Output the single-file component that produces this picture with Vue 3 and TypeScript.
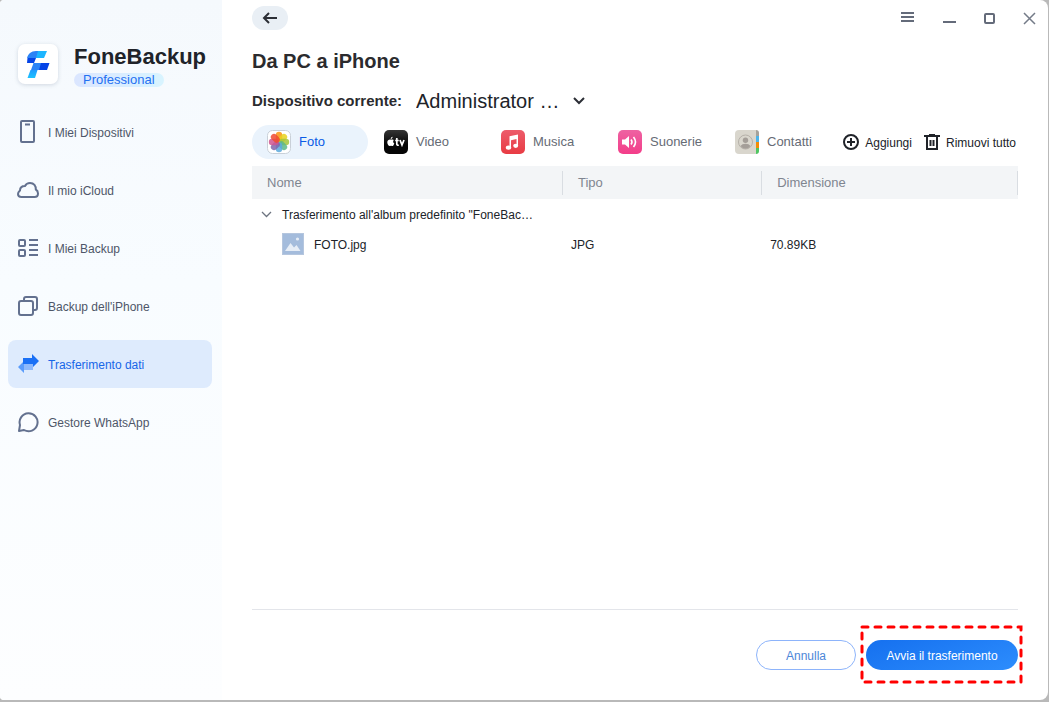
<script setup lang="ts">
import { ref } from 'vue'

interface Item {
  id: string
  label: string
}

const navItems: Item[] = [
  { id: 'devices', label: 'I Miei Dispositivi' },
  { id: 'icloud', label: 'Il mio iCloud' },
  { id: 'backups', label: 'I Miei Backup' },
  { id: 'iphone', label: "Backup dell'iPhone" },
  { id: 'transfer', label: 'Trasferimento dati' },
  { id: 'whatsapp', label: 'Gestore WhatsApp' },
]
const tabs: Item[] = [
  { id: 'photo', label: 'Foto' },
  { id: 'video', label: 'Video' },
  { id: 'music', label: 'Musica' },
  { id: 'ringtone', label: 'Suonerie' },
  { id: 'contacts', label: 'Contatti' },
]
const petals = [
  { angle: 0, color: '#f9930f' },
  { angle: 45, color: '#e8d21d' },
  { angle: 90, color: '#a4c63a' },
  { angle: 135, color: '#5cb88a' },
  { angle: 180, color: '#5aa9dc' },
  { angle: 225, color: '#8066ac' },
  { angle: 270, color: '#cf5590' },
  { angle: 315, color: '#f04a30' },
]

const activeNav = ref('transfer')
const activeTab = ref('photo')
const expanded = ref(true)
const device = ref('admin')
</script>

<template>
  <div class="window">
    <aside class="sidebar">
      <div class="brand">
        <div class="logo">
          <svg width="40" height="40" viewBox="0 0 40 40" aria-hidden="true">
            <defs>
              <linearGradient id="stem" x1="0" y1="0" x2="0" y2="1">
                <stop offset="0" stop-color="#1e9bff" />
                <stop offset="1" stop-color="#1cc3ff" />
              </linearGradient>
            </defs>
            <path d="M9 14c1-4 4-7 9-7h5l-4 7z" fill="#2b83f6" />
            <path d="M20 7h9l-3 7h-8z" fill="#1cb5ff" />
            <path d="M9.500 14H18l-2 5H9z" fill="#0544e6" />
            <path d="M15.500 19H24l-2 7h-9z" fill="#2b83f6" />
            <path d="M23 19h8.500l-2.500 7h-8z" fill="#0544e6" />
            <path d="M12.500 26h7l-2.500 8H9.500z" fill="url(#stem)" />
          </svg>
        </div>
        <div class="brand-text">
          <span class="brand-name">FoneBackup</span>
          <span class="edition">Professional</span>
        </div>
      </div>

      <nav class="nav">
        <a
          v-for="item in navItems"
          :key="item.id"
          href="#"
          class="nav-item"
          :class="{ active: item.id === activeNav }"
          @click.prevent="activeNav = item.id"
        >
          <svg class="nav-icon" width="22" height="24" viewBox="0 0 22 24" fill="none" stroke="#63718f" stroke-width="2" stroke-linejoin="round" aria-hidden="true">
            <template v-if="item.id === 'devices'">
              <rect x="4" y="1" width="13" height="21" rx="1" />
              <path d="M8 4.500h5" />
            </template>
            <path v-else-if="item.id === 'icloud'" d="M4.500 19C2 19 1 17.500 1 16c0-2 1.500-3 2-3.500 0-3 2-4.500 5-4.500 1-2 2.800-3 5-3 4 0 6 3 5.800 6.500 1.500.8 2.200 2.500 2.200 4 0 2-1.200 3.500-3.500 3.500z" />
            <template v-else-if="item.id === 'backups'">
              <rect x="2" y="4" width="6" height="6" rx="1" />
              <rect x="2" y="14" width="6" height="6" rx="1" />
              <path d="M12 4h9M12 9h9M12 14h9M12 19h9" />
            </template>
            <template v-else-if="item.id === 'iphone'">
              <rect x="2" y="7" width="14" height="14" rx="2" />
              <path d="M7 7V5q0-2 2-2h9q2 0 2 2v9q0 2-2 2h-2" />
            </template>
            <g v-else-if="item.id === 'transfer'" stroke="none">
              <path d="M1 15l6-6v3h9v6H7v3z" fill="#5a9cfb" />
              <path d="M6 6h9V2l7 7-7 7v-4H6z" fill="#1a70f5" />
              <path d="M7 12h9v6H7z" fill="#8db9fc" />
            </g>
            <path v-else d="M2 21l1-6A9 9 0 1 1 7 20z" />
          </svg>
          <span>{{ item.label }}</span>
        </a>
      </nav>
    </aside>

    <main class="main">
      <header class="topbar">
        <button type="button" class="back" aria-label="Indietro">
          <svg width="16" height="12" viewBox="0 0 16 12" fill="none" stroke="#2c2f36" stroke-width="2" aria-hidden="true">
            <path d="M15 6H2M7 1L2 6l5 5" />
          </svg>
        </button>
        <div class="controls">
          <button type="button" aria-label="Menu">
            <svg width="20" height="14" viewBox="0 0 20 14" fill="none" stroke="#646b7a" stroke-width="2" aria-hidden="true"><path d="M4 2h13M4 6h13M4 10h13" /></svg>
          </button>
          <button type="button" aria-label="Riduci a icona">
            <svg width="14" height="14" viewBox="0 0 14 14" fill="none" stroke="#646b7a" stroke-width="2" aria-hidden="true"><path d="M0 11h13" /></svg>
          </button>
          <button type="button" aria-label="Ingrandisci">
            <svg width="14" height="14" viewBox="0 0 14 14" fill="none" stroke="#646b7a" stroke-width="2" aria-hidden="true"><rect x="2" y="3" width="9" height="9" rx="1" /></svg>
          </button>
          <button type="button" aria-label="Chiudi">
            <svg width="14" height="14" viewBox="0 0 14 14" fill="none" stroke="#747b88" stroke-width="1.500" aria-hidden="true"><path d="M1 2l11 11M12 2L1 13" /></svg>
          </button>
        </div>
      </header>

      <div class="content">
        <h1>Da PC a iPhone</h1>

        <div class="device">
          <label for="device">Dispositivo corrente:</label>
          <div class="select-wrap">
            <select id="device" v-model="device">
              <option value="admin">Administrator …</option>
            </select>
            <svg width="14" height="8" viewBox="0 0 14 8" fill="none" stroke="#2c2f36" stroke-width="2" aria-hidden="true"><path d="M2 1l5 5 5-5" /></svg>
          </div>
        </div>

        <div class="toolbar">
          <div class="tabs">
            <button
              v-for="tab in tabs"
              :key="tab.id"
              type="button"
              class="tab"
              :class="{ active: tab.id === activeTab }"
              @click="activeTab = tab.id"
            >
              <svg width="24" height="24" viewBox="0 0 24 24" aria-hidden="true">
                <template v-if="tab.id === 'photo'">
                  <rect x=".5" y=".5" width="23" height="23" rx="5" fill="#fff" stroke="#c9d0d8" />
                  <rect
                    v-for="p in petals"
                    :key="p.angle"
                    x="8.800"
                    y="1.800"
                    width="6.400"
                    height="10"
                    rx="3.200"
                    :fill="p.color"
                    fill-opacity=".85"
                    :transform="`rotate(${p.angle} 12 12)`"
                  />
                </template>
                <template v-else-if="tab.id === 'video'">
                  <defs>
                    <linearGradient id="tv" x1="0" y1="0" x2="0" y2="1"><stop offset="0" stop-color="#353535" /><stop offset=".6" stop-color="#050505" /></linearGradient>
                  </defs>
                  <rect width="24" height="24" rx="5" fill="url(#tv)" />
                  <path d="M7 9.700c1-.5 2.200-.4 2.900.4-1.200.9-1 2.700.4 3.300-.6 1.800-1.600 3-2.600 2.500-.5-.2-.9-.2-1.400 0-1.500.7-3.100-2-3-3.700.1-2.300 2-3 3.700-2.500zM6.700 9c0-1.200.8-2 1.900-2.200.1 1.200-.7 2.200-1.900 2.200z" fill="#fff" />
                  <path d="M12.800 8v6q0 1.500 2 1.200M11.200 10.500h3.500M16 10l2 5 2-5" fill="none" stroke="#fff" stroke-width="1.700" />
                </template>
                <template v-else-if="tab.id === 'music'">
                  <defs>
                    <linearGradient id="mu" x1="0" y1="0" x2="0" y2="1"><stop offset="0" stop-color="#ed5c6b" /><stop offset="1" stop-color="#e83b43" /></linearGradient>
                  </defs>
                  <rect width="24" height="24" rx="5" fill="url(#mu)" />
                  <path d="M8.500 6.200L17 4.500v11.300h-1.500V9L10 10.200v7.300H8.500z" fill="#fff" />
                  <ellipse cx="7.500" cy="17.600" rx="2.700" ry="2.200" fill="#fff" />
                  <ellipse cx="14.700" cy="15.800" rx="2.500" ry="2.100" fill="#fff" />
                </template>
                <template v-else-if="tab.id === 'ringtone'">
                  <defs>
                    <linearGradient id="ri" x1="0" y1="0" x2="0" y2="1"><stop offset="0" stop-color="#ee62a2" /><stop offset="1" stop-color="#f33d89" /></linearGradient>
                  </defs>
                  <rect width="24" height="24" rx="5" fill="url(#ri)" />
                  <path d="M4 9.500h3L11 6v12l-4-3.500H4z" fill="#fff" />
                  <path d="M13 9.500q2 2.500 0 5M15.500 7q4 5 0 10" fill="none" stroke="#fff" stroke-width="1.600" />
                </template>
                <template v-else>
                  <path d="M21 0q3 0 3 3v3h-3z" fill="#a5a29b" />
                  <path d="M21 6h3v6h-3z" fill="#4bb4ea" />
                  <path d="M21 12h3v6h-3z" fill="#f28c05" />
                  <path d="M21 18h3v3q0 3-3 3z" fill="#4fc561" />
                  <path d="M4 0h17v24H4q-4 0-4-4V4q0-4 4-4z" fill="#d9d6cd" />
                  <circle cx="10.500" cy="12" r="7" fill="none" stroke="#b5b0a8" />
                  <circle cx="10.500" cy="10.200" r="2.700" fill="#a49e98" />
                  <path d="M5.500 16q1.500-2.300 5-2.300t5 2.300q-2 2.800-5 2.800t-5-2.800z" fill="#a49e98" />
                </template>
              </svg>
              <span>{{ tab.label }}</span>
            </button>
          </div>
          <div class="actions">
            <button type="button" class="action">
              <svg width="16" height="16" viewBox="0 0 16 16" fill="none" stroke="#202329" stroke-width="2" aria-hidden="true"><circle cx="8" cy="8" r="7" /><path d="M8 4v8M4 8h8" /></svg>
              <span>Aggiungi</span>
            </button>
            <button type="button" class="action">
              <svg width="16" height="16" viewBox="0 0 16 16" fill="none" stroke="#202329" stroke-width="2" aria-hidden="true"><path d="M0 2h16M5 1h6M3 2v13h10V2M6.500 6v6M9.500 6v6" /></svg>
              <span>Rimuovi tutto</span>
            </button>
          </div>
        </div>

        <table class="files">
          <colgroup>
            <col class="col-name" />
            <col class="col-type" />
            <col class="col-size" />
          </colgroup>
          <thead>
            <tr>
              <th scope="col"><div>Nome</div></th>
              <th scope="col"><div>Tipo</div></th>
              <th scope="col"><div>Dimensione</div></th>
            </tr>
          </thead>
          <tbody>
            <tr>
              <td colspan="3" class="group">
                <button type="button" class="group-toggle" :aria-expanded="expanded" @click="expanded = !expanded">
                  <svg width="11" height="7" viewBox="0 0 11 7" fill="none" stroke="#6d7480" stroke-width="1.300" aria-hidden="true"><path d="M1 1l4.500 4.500L10 1" /></svg>
                  <span>Trasferimento all'album predefinito "FoneBac…</span>
                </button>
              </td>
            </tr>
            <tr v-if="expanded">
              <td class="file">
                <div class="file-name">
                  <svg width="22" height="22" viewBox="0 0 22 22" aria-hidden="true">
                    <rect x=".5" y=".5" width="21" height="21" fill="#a4bcdc" stroke="#b5c6de" />
                    <path d="M3 18l5.500-8 3.500 4.500 2.500-2.500 4 6z" fill="#e6edf6" />
                    <circle cx="15.500" cy="6" r="1.600" fill="#e6edf6" />
                  </svg>
                  <span>FOTO.jpg</span>
                </div>
              </td>
              <td>JPG</td>
              <td>70.89KB</td>
            </tr>
          </tbody>
        </table>
      </div>

      <footer class="footer">
        <button type="button" class="btn cancel">Annulla</button>
        <div class="highlight">
          <button type="button" class="btn primary">Avvia il trasferimento</button>
          <svg class="marquee" aria-hidden="true"><rect x="2" y="2" /></svg>
        </div>
      </footer>
    </main>
  </div>
</template>

<style>
body {
  margin: 0;
  background: #b9b9b9;
}
</style>

<style scoped>
* {
  box-sizing: border-box;
}
.window {
  display: flex;
  min-height: calc(100vh - 2px);
  margin: 0 1px 2px 0;
  border-radius: 4px 8px 8px 4px;
  overflow: hidden;
  background: #fff;
  font-family: "Liberation Sans", Arial, sans-serif;
  font-size: 12px;
  line-height: 16px;
  color: #202329;
}
button {
  padding: 0;
  border: 0;
  background: none;
  font: inherit;
  color: inherit;
  cursor: pointer;
}
svg {
  display: block;
  flex: none;
}
.sidebar {
  flex: none;
  width: 222px;
  padding: 44px 10px 0 8px;
  background: linear-gradient(#f5f9fd, #f8fcff 40%, #fdfeff);
}
.brand {
  display: flex;
  gap: 16px;
  padding-left: 10px;
}
.logo {
  width: 40px;
  height: 40px;
  border-radius: 7px;
  background: #fff;
  box-shadow: 0 1px 4px rgba(60, 80, 110, 0.2);
}
.brand-text {
  display: flex;
  flex-direction: column;
  align-items: flex-start;
  gap: 4px;
}
.brand-name {
  font-size: 22px;
  font-weight: 700;
  line-height: 25px;
}
.edition {
  padding: 0 9px;
  border-radius: 7px;
  background: linear-gradient(90deg, #dbe6ff, #d8f4ff);
  color: #2470f2;
  font-size: 13px;
  line-height: 14px;
}
.nav {
  display: flex;
  flex-direction: column;
  gap: 10px;
  margin-top: 21px;
}
.nav-item {
  display: flex;
  align-items: center;
  gap: 9px;
  height: 48px;
  padding-left: 9px;
  border-radius: 8px;
  color: #4e5668;
  text-decoration: none;
}
.nav-item span,
.action span,
.file-name span {
  padding-top: 1px;
}
.nav-item.active {
  background: #deebfd;
  color: #1766e8;
}
.main {
  flex: 1;
  min-width: 0;
  display: flex;
  flex-direction: column;
}
.topbar {
  display: flex;
  align-items: center;
  justify-content: space-between;
  height: 36px;
  padding: 0 11px 0 30px;
}
.back {
  display: flex;
  align-items: center;
  justify-content: center;
  width: 36px;
  height: 24px;
  border-radius: 12px;
  background: #e9eff5;
}
.controls {
  display: flex;
  gap: 26px;
}
.content {
  flex: 1;
  padding: 0 30px;
}
h1 {
  margin: 13px 0 0;
  font-size: 20px;
  line-height: 24px;
  color: #2b2b2e;
}
.device {
  display: flex;
  align-items: center;
  gap: 14px;
  height: 28px;
  margin-top: 14px;
}
.device label {
  font-size: 15px;
  font-weight: 700;
  color: #2b2b2e;
}
.select-wrap {
  display: grid;
  align-items: center;
}
.select-wrap select,
.select-wrap svg {
  grid-area: 1 / 1;
}
.select-wrap svg {
  justify-self: end;
  pointer-events: none;
}
select {
  appearance: none;
  width: 170px;
  padding: 0;
  border: 0;
  background: none;
  font: inherit;
  font-size: 20px;
  line-height: 24px;
  color: #202329;
}
.toolbar {
  display: flex;
  justify-content: space-between;
  align-items: center;
  margin-top: 10px;
}
.tabs {
  display: flex;
  gap: 1px;
}
.tab {
  display: flex;
  align-items: center;
  gap: 8px;
  width: 116px;
  height: 34px;
  padding-left: 15px;
  border-radius: 17px;
  color: #666b75;
  font-size: 13px;
}
.tab.active {
  background: #eaf3fc;
  color: #0b5be6;
}
.actions {
  display: flex;
  gap: 12px;
  padding-right: 2px;
}
.action {
  display: flex;
  align-items: center;
  gap: 6px;
  white-space: nowrap;
}
.files {
  width: 100%;
  margin-top: 7px;
  border-collapse: collapse;
  table-layout: fixed;
}
.col-name {
  width: 40.6%;
}
.col-type {
  width: 26%;
}
.col-size {
  width: 33.4%;
}
th {
  height: 33px;
  padding: 0;
  background: #f3f5f7;
  color: #7f8590;
  font-size: 13px;
  font-weight: 400;
  text-align: left;
}
th div {
  padding-left: 15px;
  border-right: 1px solid #d9dde2;
  line-height: 24px;
}
td {
  height: 30px;
  padding: 1px 8px 0;
}
td.group {
  padding: 1px 9px 0;
}
.group-toggle {
  display: flex;
  align-items: center;
  gap: 10px;
}
td.file {
  padding: 0 0 0 30px;
}
.file-name {
  display: flex;
  align-items: center;
  gap: 10px;
}
.footer {
  display: flex;
  justify-content: flex-end;
  gap: 10px;
  margin: 0 30px;
  padding: 30px 0;
  border-top: 1px solid #e3e5ea;
}
.btn {
  display: block;
  height: 30px;
  padding-top: 1px;
  border-radius: 15px;
}
.cancel {
  width: 100px;
  border: 1px solid #8db4fb;
  color: #4c86d8;
}
.primary {
  width: 152px;
  background: linear-gradient(160deg, #1570ef, #2d8dfd);
  color: #fff;
}
.highlight {
  position: relative;
}
.marquee {
  position: absolute;
  top: -15px;
  left: -6px;
  width: calc(100% + 11px);
  height: calc(100% + 29px);
  overflow: visible;
  pointer-events: none;
}
.marquee rect {
  width: calc(100% - 4px);
  height: calc(100% - 4px);
  fill: none;
  stroke: #ff0000;
  stroke-width: 3px;
  stroke-dasharray: 6 7;
  stroke-linecap: round;
}
</style>
